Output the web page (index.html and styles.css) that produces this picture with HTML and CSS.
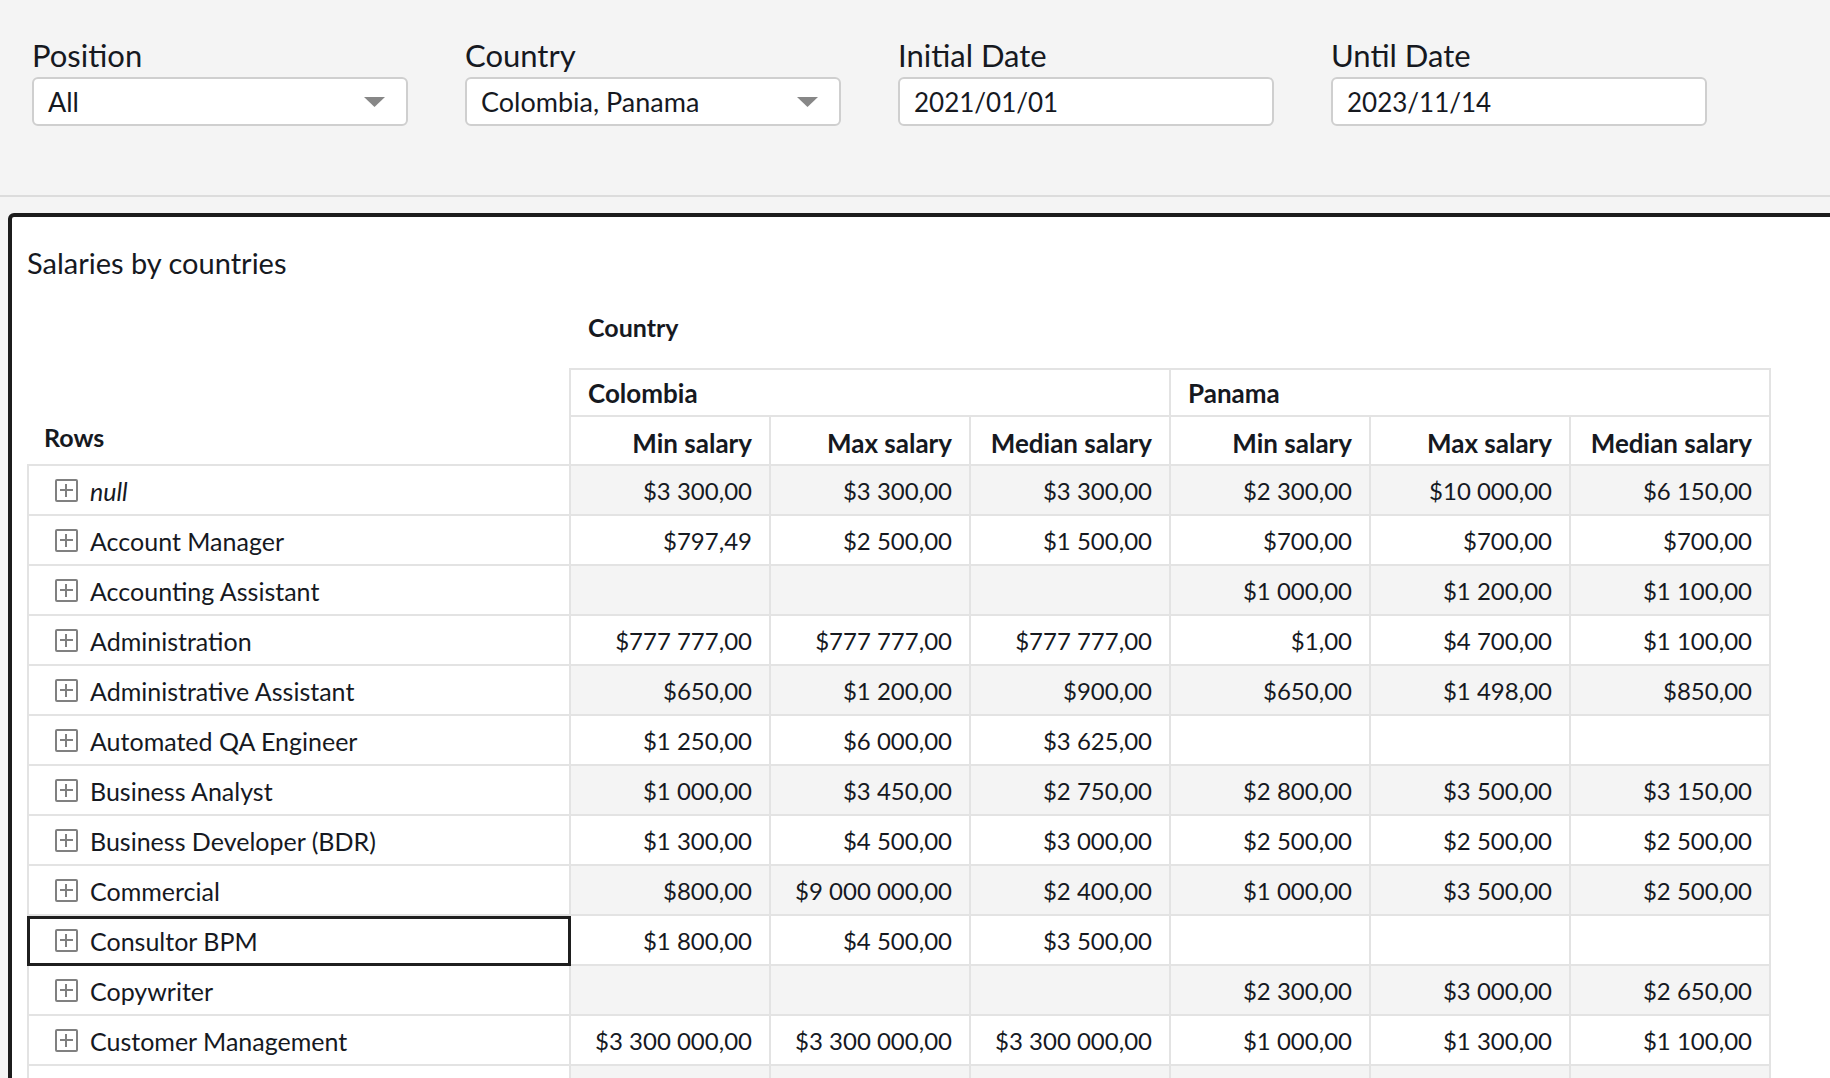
FILE: index.html
```html
<!DOCTYPE html>
<html lang="en">
<head>
<meta charset="utf-8">
<title>Salaries by countries</title>
<link rel="stylesheet" href="styles.css">
</head>
<body>
<header class="filters">
  <div class="field">
    <div class="label">Position</div>
    <div class="control">
      <span class="value">All</span>
      <svg class="caret" width="21" height="10" viewBox="0 0 21 10"><polygon points="0,0 21,0 10.5,10" fill="#878787"/></svg>
    </div>
  </div>
  <div class="field">
    <div class="label">Country</div>
    <div class="control">
      <span class="value">Colombia, Panama</span>
      <svg class="caret" width="21" height="10" viewBox="0 0 21 10"><polygon points="0,0 21,0 10.5,10" fill="#878787"/></svg>
    </div>
  </div>
  <div class="field">
    <div class="label">Initial Date</div>
    <div class="control date"><span class="value">2021/01/01</span></div>
  </div>
  <div class="field">
    <div class="label">Until Date</div>
    <div class="control date"><span class="value">2023/11/14</span></div>
  </div>
</header>

<main class="card">
  <h1 class="title">Salaries by countries</h1>
  <div class="pivot">
    <div class="caption-spacer"></div>
    <div class="caption">Country</div>

    <div class="rowhead">Rows</div>
    <div class="grouphead">Colombia</div>
    <div class="grouphead">Panama</div>
    <div class="colhead">Min salary</div>
    <div class="colhead">Max salary</div>
    <div class="colhead">Median salary</div>
    <div class="colhead">Min salary</div>
    <div class="colhead">Max salary</div>
    <div class="colhead">Median salary</div>

    <div class="row alt">
      <div class="lbl"><span class="expand"></span><em>null</em></div>
      <div class="val">$3 300,00</div><div class="val">$3 300,00</div><div class="val">$3 300,00</div>
      <div class="val">$2 300,00</div><div class="val">$10 000,00</div><div class="val">$6 150,00</div>
    </div>
    <div class="row">
      <div class="lbl"><span class="expand"></span>Account Manager</div>
      <div class="val">$797,49</div><div class="val">$2 500,00</div><div class="val">$1 500,00</div>
      <div class="val">$700,00</div><div class="val">$700,00</div><div class="val">$700,00</div>
    </div>
    <div class="row alt">
      <div class="lbl"><span class="expand"></span>Accounting Assistant</div>
      <div class="val"></div><div class="val"></div><div class="val"></div>
      <div class="val">$1 000,00</div><div class="val">$1 200,00</div><div class="val">$1 100,00</div>
    </div>
    <div class="row">
      <div class="lbl"><span class="expand"></span>Administration</div>
      <div class="val">$777 777,00</div><div class="val">$777 777,00</div><div class="val">$777 777,00</div>
      <div class="val">$1,00</div><div class="val">$4 700,00</div><div class="val">$1 100,00</div>
    </div>
    <div class="row alt">
      <div class="lbl"><span class="expand"></span>Administrative Assistant</div>
      <div class="val">$650,00</div><div class="val">$1 200,00</div><div class="val">$900,00</div>
      <div class="val">$650,00</div><div class="val">$1 498,00</div><div class="val">$850,00</div>
    </div>
    <div class="row">
      <div class="lbl"><span class="expand"></span>Automated QA Engineer</div>
      <div class="val">$1 250,00</div><div class="val">$6 000,00</div><div class="val">$3 625,00</div>
      <div class="val"></div><div class="val"></div><div class="val"></div>
    </div>
    <div class="row alt">
      <div class="lbl"><span class="expand"></span>Business Analyst</div>
      <div class="val">$1 000,00</div><div class="val">$3 450,00</div><div class="val">$2 750,00</div>
      <div class="val">$2 800,00</div><div class="val">$3 500,00</div><div class="val">$3 150,00</div>
    </div>
    <div class="row">
      <div class="lbl"><span class="expand"></span>Business Developer (BDR)</div>
      <div class="val">$1 300,00</div><div class="val">$4 500,00</div><div class="val">$3 000,00</div>
      <div class="val">$2 500,00</div><div class="val">$2 500,00</div><div class="val">$2 500,00</div>
    </div>
    <div class="row alt">
      <div class="lbl"><span class="expand"></span>Commercial</div>
      <div class="val">$800,00</div><div class="val">$9 000 000,00</div><div class="val">$2 400,00</div>
      <div class="val">$1 000,00</div><div class="val">$3 500,00</div><div class="val">$2 500,00</div>
    </div>
    <div class="row">
      <div class="lbl focus"><span class="expand"></span>Consultor BPM</div>
      <div class="val">$1 800,00</div><div class="val">$4 500,00</div><div class="val">$3 500,00</div>
      <div class="val"></div><div class="val"></div><div class="val"></div>
    </div>
    <div class="row alt">
      <div class="lbl"><span class="expand"></span>Copywriter</div>
      <div class="val"></div><div class="val"></div><div class="val"></div>
      <div class="val">$2 300,00</div><div class="val">$3 000,00</div><div class="val">$2 650,00</div>
    </div>
    <div class="row">
      <div class="lbl"><span class="expand"></span>Customer Management</div>
      <div class="val">$3 300 000,00</div><div class="val">$3 300 000,00</div><div class="val">$3 300 000,00</div>
      <div class="val">$1 000,00</div><div class="val">$1 300,00</div><div class="val">$1 100,00</div>
    </div>
    <div class="row alt">
      <div class="lbl"><span class="expand"></span></div>
      <div class="val"></div><div class="val"></div><div class="val"></div>
      <div class="val"></div><div class="val"></div><div class="val"></div>
    </div>
  </div>
</main>
</body>
</html>
```
FILE: styles.css
```css
* { box-sizing: border-box; }

html, body {
  margin: 0;
  padding: 0;
  height: 100%;
  overflow: hidden;
}

body {
  background: #f4f4f4;
  font-family: "Lato", "Open Sans", sans-serif;
  color: #16191f;
}

/* ---------- filter bar ---------- */
.filters {
  display: flex;
  gap: 57px;
  height: 197px;
  padding: 37px 0 0 32px;
  border-bottom: 2px solid #dcdcdc;
  background: #f4f4f4;
}

.field {
  width: 376px;
  display: flex;
  flex-direction: column;
  gap: 4px;
}

.label {
  font-size: 31px;
  line-height: 36px;
  font-weight: 400;
}

.control {
  height: 49px;
  display: flex;
  align-items: center;
  justify-content: space-between;
  padding: 1px 21px 0 14px;
  background: #fff;
  border: 2px solid #cfcfcf;
  border-radius: 6px;
  font-size: 27px;
  line-height: 32px;
}

.control.date { font-size: 26px; }

.caret {
  flex: none;
  margin-top: 0;
}

/* ---------- card ---------- */
.card {
  margin: 16px -40px 0 8px;
  height: 900px;
  padding: 28px 15px 0;
  background: #fff;
  border: 4px solid #1c1c1c;
  border-radius: 6px 6px 0 0;
}

.title {
  margin: 0 0 32px;
  font-size: 29px;
  line-height: 35px;
  font-weight: 400;
}

/* ---------- pivot table ---------- */
.pivot {
  display: grid;
  grid-template-columns: 544px repeat(6, 200px);
  font-size: 25px;
}

.caption-spacer { grid-column: 1; }

.caption {
  grid-column: 2 / span 6;
  padding: 0 0 26px 17px;
  font-size: 25px;
  line-height: 30px;
  font-weight: 700;
}

.rowhead {
  grid-column: 1;
  grid-row: span 2;
  display: flex;
  align-items: flex-end;
  padding: 0 0 12px 17px;
  border-right: 2px solid #e3e3e3;
  border-bottom: 2px solid #e3e3e3;
  font-size: 25px;
  line-height: 30px;
  font-weight: 700;
}

.grouphead {
  grid-column: span 3;
  height: 49px;
  display: flex;
  align-items: center;
  padding: 0 17px;
  border-top: 2px solid #e3e3e3;
  border-right: 2px solid #e3e3e3;
  border-bottom: 2px solid #e3e3e3;
  font-size: 26px;
  line-height: 30px;
  font-weight: 700;
}

.colhead {
  height: 49px;
  display: flex;
  align-items: center;
  justify-content: flex-end;
  padding: 5px 17px 0;
  border-right: 2px solid #e3e3e3;
  border-bottom: 2px solid #e3e3e3;
  font-size: 26px;
  line-height: 30px;
  font-weight: 700;
}

.row { display: contents; }

.lbl, .val {
  height: 50px;
  display: flex;
  align-items: center;
  padding-top: 2px;
  border-right: 2px solid #e3e3e3;
  border-bottom: 2px solid #e3e3e3;
  line-height: 30px;
  white-space: nowrap;
}

.lbl {
  gap: 12px;
  padding-left: 26px;
  border-left: 2px solid #e3e3e3;
  background: #fff;
}

.lbl em { font-style: italic; }

.val {
  justify-content: flex-end;
  padding-right: 17px;
  background: #fff;
  font-size: 24px;
}

.row.alt .val { background: #f4f4f4; }

.expand {
  position: relative;
  flex: none;
  width: 23px;
  height: 23px;
  margin-top: -2px;
  border: 2px solid #808080;
  border-radius: 2px;
}

.expand::before,
.expand::after {
  content: "";
  position: absolute;
  background: #808080;
}

.expand::before {
  left: 3px;
  right: 3px;
  top: 8px;
  height: 2px;
}

.expand::after {
  top: 3px;
  bottom: 3px;
  left: 8px;
  width: 2px;
}

.lbl.focus { position: relative; }

.lbl.focus::after {
  content: "";
  position: absolute;
  top: 0;
  left: -2px;
  right: -2px;
  bottom: -2px;
  border: 3px solid #1f1f1f;
}
```
